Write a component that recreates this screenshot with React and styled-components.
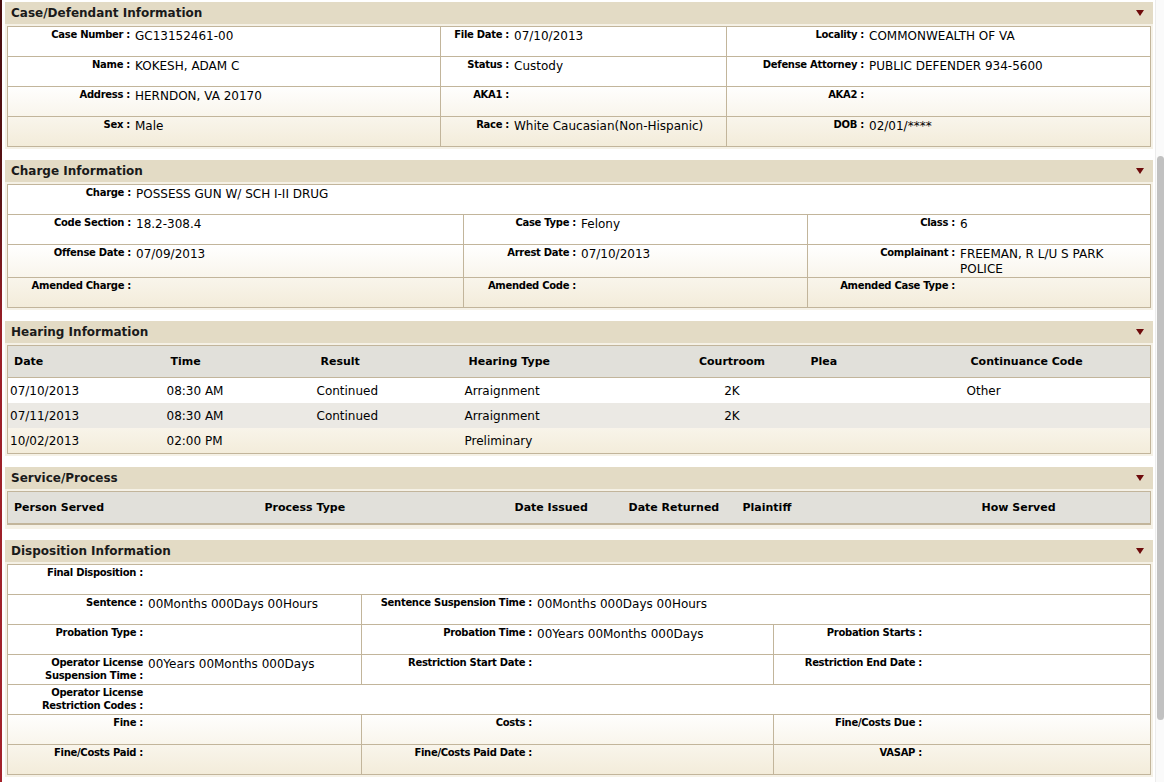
import React from 'react'
import styled, { createGlobalStyle } from 'styled-components'

const GlobalStyle = createGlobalStyle`
  html, body { margin: 0; padding: 0; background: #fff; }
  body {
    font-family: "DejaVu Sans", Verdana, sans-serif;
    color: #000;
    overflow: hidden;
  }
`

const Page = styled.div`
  display: flex;
  min-height: 782px;
`

const Strip = styled.div`
  flex: none;
  width: 2px;
  background: linear-gradient(to bottom, #480d0f 0, #5a1315 200px, #9b1f28 330px, #a3222b 100%);
`

const Content = styled.div`
  width: 1148px;
  padding: 2px 0 0 3px;
`

const Section = styled.section`
  margin-bottom: 11px;
`

const SectionHeader = styled.div`
  height: 22px;
  display: flex;
  align-items: center;
  justify-content: space-between;
  padding: 0 9px 0 6px;
  background: #e3dbc5;
  font-size: 12px;
  font-weight: bold;
  color: #1a1a1a;
`

const Frame = styled.div`
  padding: 2px 2px ${p => p.$pb || 2}px;
  background: #f5f1e6;
`

const InfoTable = styled.div`
  border: 1px solid #c2b59b;
  background: linear-gradient(#fff, #f3ecda) bottom / 100% 62px no-repeat, #fff;
`

const InfoRow = styled.div`
  display: grid;
  grid-template-columns: ${p => p.$cols};
  min-height: 29px;
  & + & {
    border-top: 1px solid #c2b59b;
  }
`

const FieldBox = styled.div`
  display: grid;
  grid-template-columns: ${p => p.$lw}px minmax(0, 1fr);
  column-gap: 5px;
  align-items: start;
  padding: 1px 6px 0 0;
  grid-column: ${p => (p.$full ? '1 / -1' : p.$span ? `span ${p.$span}` : 'auto')};
  & + & {
    border-left: 1px solid #c2b59b;
  }
`

const Label = styled.span`
  text-align: right;
  font-size: 10px;
  letter-spacing: -0.3px;
  line-height: 13px;
  font-weight: bold;
`

const Value = styled.span`
  margin-top: 1px;
  font-size: 12px;
  line-height: 15px;
`

const ListTable = styled.table`
  width: 100%;
  border-collapse: collapse;
  table-layout: fixed;
  border: 1px solid #c2b59b;
  border-bottom-width: ${p => (p.$thick ? '2px' : '1px')};
  background: linear-gradient(#fff, #f3ecda) bottom / 100% 62px no-repeat, #fff;
`

const Th = styled.th`
  height: 31px;
  padding: 0 0 0 ${p => (p.$center ? '0' : '6px')};
  text-align: ${p => (p.$center ? 'center' : 'left')};
  font-size: 11px;
  font-weight: bold;
  background: #e1e0da;
  border-bottom: 1px solid #c2b59b;
`

const Tr = styled.tr`
  background: ${p => p.$bg || 'transparent'};
`

const Td = styled.td`
  height: 25px;
  padding: 0 0 0 ${p => (p.$center ? '0' : '2px')};
  text-align: ${p => (p.$center ? 'center' : 'left')};
  font-size: 12px;
  white-space: nowrap;
`

const ScrollTrack = styled.div`
  position: fixed;
  top: 0;
  right: 0;
  bottom: 0;
  width: 8px;
  background: #fafafa;
  border-left: 1px solid #ececec;
`

const ScrollThumb = styled.div`
  position: absolute;
  top: 156px;
  left: 1px;
  width: 7px;
  height: 564px;
  border-radius: 4px;
  background: #c1c1c1;
`

const Toggle = () => (
  <svg width="8" height="6" viewBox="0 0 8 6">
    <polygon points="0,0 8,0 4,6" fill="#6e0b0b" />
  </svg>
)

const Field = ({ label, value, lw, span, full }) => (
  <FieldBox $lw={lw} $span={span} $full={full}>
    <Label>{label}</Label>
    <Value>{value}</Value>
  </FieldBox>
)

const Panel = ({ title, pb, children }) => (
  <Section>
    <SectionHeader>
      <span>{title}</span>
      <Toggle />
    </SectionHeader>
    <Frame $pb={pb}>{children}</Frame>
  </Section>
)

const caseCols = '432px 286px 1fr'
const chargeCols = '455px 344px 1fr'
const dispCols = '353px 412px 1fr'

const hearings = [
  { date: '07/10/2013', time: '08:30 AM', result: 'Continued', type: 'Arraignment', room: '2K', plea: '', code: 'Other', bg: '#fff' },
  { date: '07/11/2013', time: '08:30 AM', result: 'Continued', type: 'Arraignment', room: '2K', plea: '', code: '', bg: '#ebe9e4' },
  { date: '10/02/2013', time: '02:00 PM', result: '', type: 'Preliminary', room: '', plea: '', code: '' },
]

export default function App() {
  return (
    <>
      <GlobalStyle />
      <Page>
        <Strip />
        <Content>
          <Panel title="Case/Defendant Information">
            <InfoTable>
              <InfoRow $cols={caseCols}>
                <Field lw={122} label="Case Number :" value="GC13152461-00" />
                <Field lw={68} label="File Date :" value="07/10/2013" />
                <Field lw={137} label="Locality :" value="COMMONWEALTH OF VA" />
              </InfoRow>
              <InfoRow $cols={caseCols}>
                <Field lw={122} label="Name :" value="KOKESH, ADAM C" />
                <Field lw={68} label="Status :" value="Custody" />
                <Field lw={137} label="Defense Attorney :" value="PUBLIC DEFENDER 934-5600" />
              </InfoRow>
              <InfoRow $cols={caseCols}>
                <Field lw={122} label="Address :" value="HERNDON, VA 20170" />
                <Field lw={68} label="AKA1 :" value="" />
                <Field lw={137} label="AKA2 :" value="" />
              </InfoRow>
              <InfoRow $cols={caseCols}>
                <Field lw={122} label="Sex :" value="Male" />
                <Field lw={68} label="Race :" value="White Caucasian(Non-Hispanic)" />
                <Field lw={137} label="DOB :" value="02/01/****" />
              </InfoRow>
            </InfoTable>
          </Panel>

          <Panel title="Charge Information">
            <InfoTable>
              <InfoRow $cols={chargeCols}>
                <Field full lw={123} label="Charge :" value="POSSESS GUN W/ SCH I-II DRUG" />
              </InfoRow>
              <InfoRow $cols={chargeCols}>
                <Field lw={123} label="Code Section :" value="18.2-308.4" />
                <Field lw={112} label="Case Type :" value="Felony" />
                <Field lw={147} label="Class :" value="6" />
              </InfoRow>
              <InfoRow $cols={chargeCols}>
                <Field lw={123} label="Offense Date :" value="07/09/2013" />
                <Field lw={112} label="Arrest Date :" value="07/10/2013" />
                <Field lw={147} label="Complainant :" value="FREEMAN, R L/U S PARK POLICE" />
              </InfoRow>
              <InfoRow $cols={chargeCols}>
                <Field lw={123} label="Amended Charge :" value="" />
                <Field lw={112} label="Amended Code :" value="" />
                <Field lw={147} label="Amended Case Type :" value="" />
              </InfoRow>
            </InfoTable>
          </Panel>

          <Panel title="Hearing Information">
            <ListTable>
              <colgroup>
                <col style={{ width: 157 }} />
                <col style={{ width: 150 }} />
                <col style={{ width: 148 }} />
                <col style={{ width: 197 }} />
                <col style={{ width: 145 }} />
                <col style={{ width: 160 }} />
                <col />
              </colgroup>
              <thead>
                <tr>
                  <Th>Date</Th>
                  <Th>Time</Th>
                  <Th>Result</Th>
                  <Th>Hearing Type</Th>
                  <Th $center>Courtroom</Th>
                  <Th>Plea</Th>
                  <Th>Continuance Code</Th>
                </tr>
              </thead>
              <tbody>
                {hearings.map(h => (
                  <Tr key={h.date} $bg={h.bg}>
                    <Td>{h.date}</Td>
                    <Td>{h.time}</Td>
                    <Td>{h.result}</Td>
                    <Td>{h.type}</Td>
                    <Td $center>{h.room}</Td>
                    <Td>{h.plea}</Td>
                    <Td>{h.code}</Td>
                  </Tr>
                ))}
              </tbody>
            </ListTable>
          </Panel>

          <Panel title="Service/Process" pb={4}>
            <ListTable $thick>
              <colgroup>
                <col style={{ width: 251 }} />
                <col style={{ width: 250 }} />
                <col style={{ width: 114 }} />
                <col style={{ width: 114 }} />
                <col style={{ width: 239 }} />
                <col />
              </colgroup>
              <thead>
                <tr>
                  <Th>Person Served</Th>
                  <Th>Process Type</Th>
                  <Th>Date Issued</Th>
                  <Th>Date Returned</Th>
                  <Th>Plaintiff</Th>
                  <Th>How Served</Th>
                </tr>
              </thead>
            </ListTable>
          </Panel>

          <Panel title="Disposition Information">
            <InfoTable>
              <InfoRow $cols={dispCols}>
                <Field full lw={135} label="Final Disposition :" value="" />
              </InfoRow>
              <InfoRow $cols={dispCols}>
                <Field lw={135} label="Sentence :" value="00Months 000Days 00Hours" />
                <Field span={2} lw={170} label="Sentence Suspension Time :" value="00Months 000Days 00Hours" />
              </InfoRow>
              <InfoRow $cols={dispCols}>
                <Field lw={135} label="Probation Type :" value="" />
                <Field lw={170} label="Probation Time :" value="00Years 00Months 000Days" />
                <Field lw={148} label="Probation Starts :" value="" />
              </InfoRow>
              <InfoRow $cols={dispCols}>
                <Field lw={135} label="Operator License Suspension Time :" value="00Years 00Months 000Days" />
                <Field lw={170} label="Restriction Start Date :" value="" />
                <Field lw={148} label="Restriction End Date :" value="" />
              </InfoRow>
              <InfoRow $cols={dispCols}>
                <Field full lw={135} label="Operator License Restriction Codes :" value="" />
              </InfoRow>
              <InfoRow $cols={dispCols}>
                <Field lw={135} label="Fine :" value="" />
                <Field lw={170} label="Costs :" value="" />
                <Field lw={148} label="Fine/Costs Due :" value="" />
              </InfoRow>
              <InfoRow $cols={dispCols}>
                <Field lw={135} label="Fine/Costs Paid :" value="" />
                <Field lw={170} label="Fine/Costs Paid Date :" value="" />
                <Field lw={148} label="VASAP :" value="" />
              </InfoRow>
            </InfoTable>
          </Panel>
        </Content>
      </Page>
      <ScrollTrack>
        <ScrollThumb />
      </ScrollTrack>
    </>
  )
}
